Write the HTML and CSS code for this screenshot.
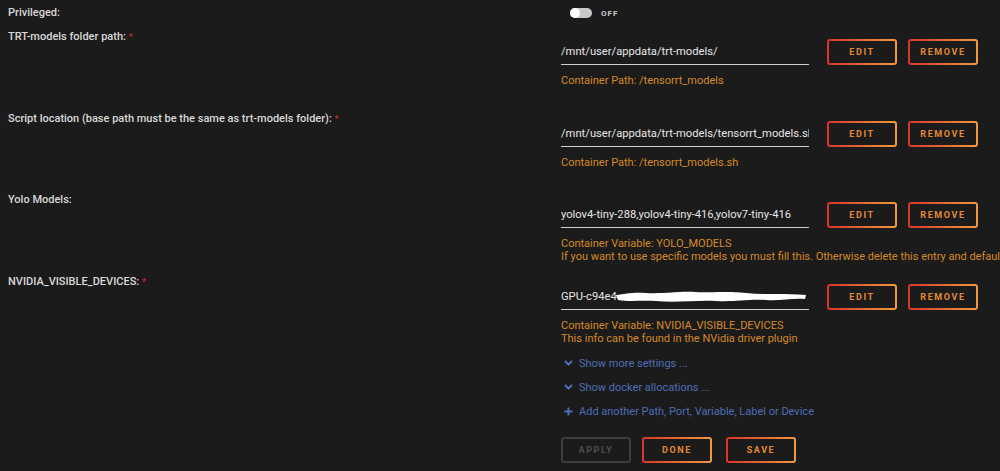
FILE: index.html
```html
<!DOCTYPE html>
<html lang="en">
<head>
    <meta charset="UTF-8">
    <meta name="viewport" content="width=device-width, initial-scale=1.0">
    <title>Update Container</title>
    <link rel="stylesheet" href="styles.css">
</head>
<body>
    <div class="form">
        <div class="row row-switch">
            <div class="label">Privileged:</div>
            <div class="value switch-line">
                <span class="switch"><span class="knob"></span></span>
                <span class="switch-text">OFF</span>
            </div>
        </div>

        <div class="row">
            <div class="label">TRT-models folder path: <span class="req">*</span></div>
            <div class="value">
                <div class="field">
                    <div class="input">/mnt/user/appdata/trt-models/</div>
                    <button class="btn">EDIT</button>
                    <button class="btn">REMOVE</button>
                </div>
                <div class="hint">Container Path: /tensorrt_models</div>
            </div>
        </div>

        <div class="row">
            <div class="label">Script location (base path must be the same as trt-models folder): <span class="req">*</span></div>
            <div class="value">
                <div class="field">
                    <div class="input">/mnt/user/appdata/trt-models/tensorrt_models.sh</div>
                    <button class="btn">EDIT</button>
                    <button class="btn">REMOVE</button>
                </div>
                <div class="hint">Container Path: /tensorrt_models.sh</div>
            </div>
        </div>

        <div class="row">
            <div class="label">Yolo Models:</div>
            <div class="value">
                <div class="field">
                    <div class="input">yolov4-tiny-288,yolov4-tiny-416,yolov7-tiny-416</div>
                    <button class="btn">EDIT</button>
                    <button class="btn">REMOVE</button>
                </div>
                <div class="hint">Container Variable: YOLO_MODELS</div>
                <div class="hint">If you want to use specific models you must fill this. Otherwise delete this entry and default</div>
            </div>
        </div>

        <div class="row row-auto">
            <div class="label">NVIDIA_VISIBLE_DEVICES: <span class="req">*</span></div>
            <div class="value">
                <div class="field">
                    <div class="input">GPU-c94e4<svg class="scribble" width="192" height="16" viewBox="0 0 192 16"><path d="M0 6 C10 5 16 3 30 4 C50 5 60 2 80 3 C100 4 110 2 130 4 C150 6 170 4 190 6 L189 10 C175 9 165 12 150 11 C130 10 120 13 100 12 C80 11 60 14 40 12 C25 11 15 13 2 11 Z" fill="#ffffff"/></svg></div>
                    <button class="btn">EDIT</button>
                    <button class="btn">REMOVE</button>
                </div>
                <div class="hint">Container Variable: NVIDIA_VISIBLE_DEVICES</div>
                <div class="hint">This info can be found in the NVidia driver plugin</div>
            </div>
        </div>

        <div class="row row-auto">
            <div></div>
            <div class="value">
                <div class="links">
                    <a class="link"><svg width="9" height="6" viewBox="0 0 9 6"><path d="M1 1 L4.5 4.5 L8 1" fill="none" stroke="#4c6db8" stroke-width="2"/></svg>Show more settings ...</a>
                    <a class="link"><svg width="9" height="6" viewBox="0 0 9 6"><path d="M1 1 L4.5 4.5 L8 1" fill="none" stroke="#4c6db8" stroke-width="2"/></svg>Show docker allocations ...</a>
                    <a class="link"><svg width="9" height="9" viewBox="0 0 9 9"><path d="M4.5 0.5 V8.5 M0.5 4.5 H8.5" fill="none" stroke="#4c6db8" stroke-width="2"/></svg>Add another Path, Port, Variable, Label or Device</a>
                </div>
                <div class="actions">
                    <button class="btn btn-disabled">APPLY</button>
                    <button class="btn btn-done">DONE</button>
                    <button class="btn">SAVE</button>
                </div>
            </div>
        </div>
    </div>
</body>
</html>
```

FILE: styles.css
```css
body {
    margin: 0;
    background-color: #1c1b1b;
    font-family: Roboto, "Noto Sans", sans-serif;
    color: #e4e4e4;
}

.form {
    padding: 6px 0 0 8px;
    overflow: hidden;
}

.row {
    display: grid;
    grid-template-columns: 553px 439px;
    height: 81.7px;
}

.row-switch {
    height: 24px;
}

.row-auto {
    height: auto;
}

.label {
    font-size: 11px;
    font-weight: 500;
    line-height: 14px;
    color: #d8d8d8;
    white-space: nowrap;
}

.req {
    color: #c62b2b;
    font-size: 9px;
    vertical-align: top;
}

.value {
    min-width: 0;
    overflow: hidden;
}

.switch-line {
    display: flex;
    align-items: center;
    gap: 9px;
    height: 14px;
    padding-left: 9px;
}

.switch {
    display: inline-flex;
    align-items: center;
    width: 22px;
    height: 10px;
    border-radius: 5px;
    background-color: #c8c8c8;
}

.knob {
    width: 10px;
    height: 10px;
    border-radius: 5px;
    background-color: #ffffff;
}

.switch-text {
    font-size: 8px;
    font-weight: 700;
    letter-spacing: 1px;
    color: #cfcfcf;
}

.field {
    display: flex;
    align-items: flex-start;
    margin-top: 9px;
}

.input {
    display: flex;
    align-items: center;
    flex-shrink: 0;
    width: 248px;
    height: 25px;
    border-bottom: 1px solid #cfcfcf;
    font-size: 11.2px;
    color: #e6e6e6;
    white-space: nowrap;
    overflow: hidden;
    margin-right: 18px;
}

.scribble {
    flex-shrink: 0;
    margin-left: -1px;
}

.btn {
    flex-shrink: 0;
    width: 70px;
    height: 26px;
    margin-right: 11px;
    padding: 0;
    border: 2px solid transparent;
    border-radius: 3px;
    background: linear-gradient(#1c1b1b, #1c1b1b) padding-box,
                linear-gradient(to right, #d9342b, #f09a3c) border-box;
    color: #e38a34;
    font-family: Roboto, "Noto Sans", sans-serif;
    font-size: 9px;
    font-weight: 700;
    letter-spacing: 1.6px;
    cursor: pointer;
}

.hint {
    font-size: 11px;
    line-height: 13px;
    color: #d48a26;
    white-space: nowrap;
}

.field + .hint {
    margin-top: 9px;
}

.links {
    margin-top: 6px;
}

.link {
    display: flex;
    align-items: center;
    gap: 6px;
    height: 24px;
    padding-left: 3px;
    font-size: 11px;
    color: #4c6db8;
    white-space: nowrap;
}

.actions {
    display: flex;
    margin-top: 14px;
}

.btn-done {
    margin-right: 14px;
}

.btn-disabled {
    background: #1c1b1b;
    border-color: #3d3d3d;
    color: #4d4d4d;
}
```
